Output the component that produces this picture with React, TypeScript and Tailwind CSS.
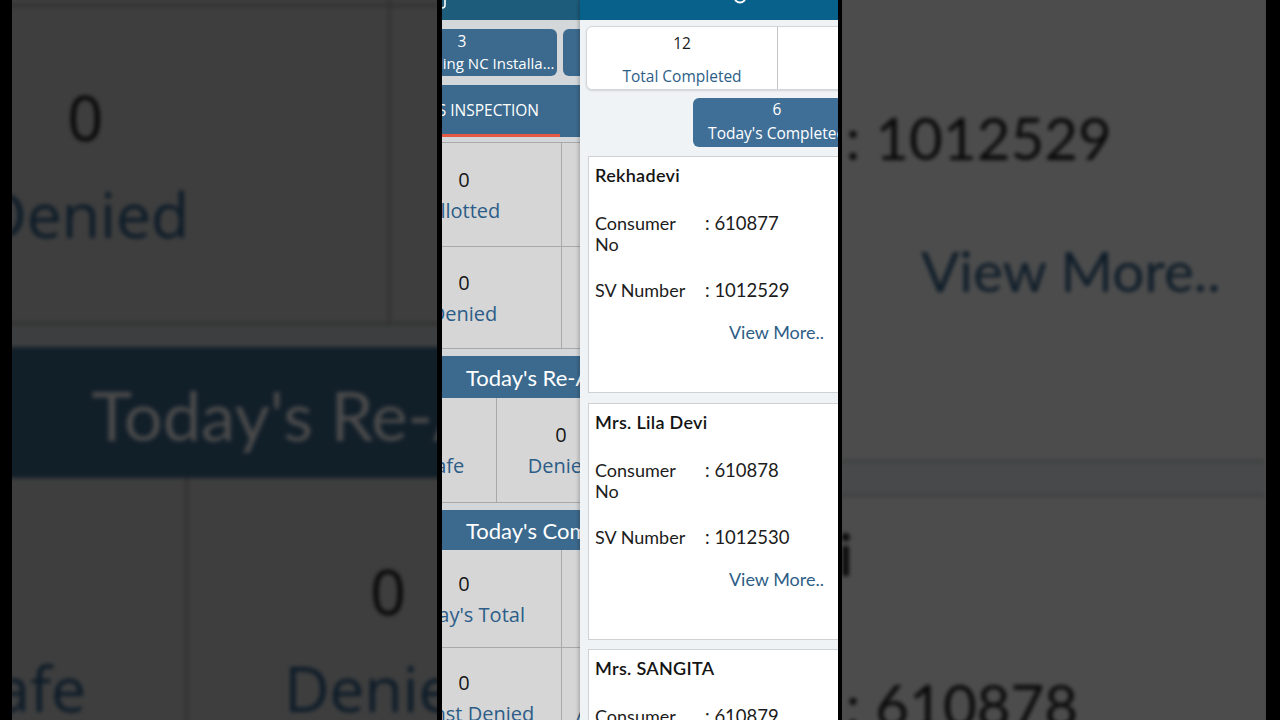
const StatCell = ({ value, label, className }: { value: string; label: string; className: string }) => (
  <div className={`flex flex-col items-center whitespace-nowrap ${className}`}>
    <span className="text-[20px] leading-[26px] text-[#161616]">{value}</span>
    <span className="text-[20px] leading-[36px] text-[#2b5d88]">{label}</span>
  </div>
);

// dashboard behind the drawer; its origin sits 75px left of the phone edge
function MainScreen() {
  return (
    <div className="-ml-[75px] w-[400px] bg-[#d3d7da] font-['Open_Sans',sans-serif]">
      <div className="h-[20px] bg-[#1d5c7b] pl-[74px]">
        <svg width="6" height="9" viewBox="0 0 6 9">
          <path d="M4 0 V5 Q4 8 1 8" stroke="white" strokeWidth="1.6" fill="none" />
        </svg>
      </div>

      <div className="flex gap-[6px] py-[9px]">
        <div className="flex h-[47px] w-[190px] flex-col items-center rounded-[6px] bg-[#3c6a8e] pt-[2px] text-white">
          <span className="text-[15.5px] leading-[20px]">3</span>
          <span className="w-full truncate pl-[40px] pr-[1px] text-[15px] leading-[24px]">Pending NC Installation</span>
        </div>
        <div className="flex h-[47px] w-[190px] flex-col items-center rounded-[6px] bg-[#3c6a8e] pt-[2px] text-white">
          <span className="text-[15.5px] leading-[20px]">0</span>
          <span className="text-[15px] leading-[24px]">Pending</span>
        </div>
      </div>

      <div className="flex h-[52px] flex-col bg-[#3c6a8e]">
        <div className="flex h-[49px] items-center pt-[3px]">
          <span className="w-[172px] whitespace-nowrap text-right text-[15.5px] font-medium text-white">GAS INSPECTION</span>
        </div>
        <div className="h-[3px] w-[193px] bg-[#e05a44]" />
      </div>

      <div className="mt-[5px] border-t border-[#a9a9a9] bg-[#d6d6d6]">
        <div className="flex h-[104px] border-b border-[#a9a9a9]">
          <StatCell className="w-[195px] border-r border-[#a9a9a9] pt-[24px]" value="0" label="Allotted" />
          <StatCell className="flex-1 pt-[24px]" value="0" label="Re-Allotted" />
        </div>
        <div className="flex h-[102px] border-b border-[#a9a9a9]">
          <StatCell className="w-[195px] border-r border-[#a9a9a9] pt-[23px]" value="0" label="Denied" />
          <StatCell className="flex-1 pt-[23px]" value="0" label="Pending" />
        </div>
      </div>

      <div className="mt-[7px] flex h-[42px] items-center whitespace-nowrap bg-[#3c6a8e] pl-[99px] font-['Lato',sans-serif] text-[22px] text-white">
        Today's Re-Allotted
      </div>
      <div className="flex h-[105px] border-b border-[#a9a9a9] bg-[#d6d6d6]">
        <StatCell className="w-[130px] border-r border-[#a9a9a9] pt-[24px]" value="0" label="Unsafe" />
        <StatCell className="w-[129px] border-r border-[#a9a9a9] pt-[24px]" value="0" label="Denied" />
        <StatCell className="flex-1 pt-[24px]" value="0" label="Safe" />
      </div>

      <div className="mt-[7px] flex h-[40px] items-center whitespace-nowrap bg-[#3c6a8e] pl-[99px] font-['Lato',sans-serif] text-[22px] text-white">
        Today's Completed
      </div>
      <div className="bg-[#d6d6d6]">
        <div className="flex h-[98px] border-b border-[#a9a9a9]">
          <StatCell className="w-[195px] border-r border-[#a9a9a9] pt-[21px]" value="0" label="Today's Total" />
          <StatCell className="flex-1 pt-[21px]" value="0" label="Safe" />
        </div>
        <div className="flex h-[98px] border-b border-[#a9a9a9]">
          <StatCell className="w-[195px] border-r border-[#a9a9a9] pt-[22px]" value="0" label="Against Denied" />
          <StatCell className="flex-1 pt-[22px]" value="0" label="Against Re-Allotted" />
        </div>
      </div>
    </div>
  );
}

const consumers = [
  { name: "Rekhadevi", no: "610877", sv: "1012529" },
  { name: "Mrs. Lila Devi", no: "610878", sv: "1012530" },
  { name: "Mrs. SANGITA", no: "610879", sv: "1012531" },
];

function Drawer() {
  return (
    <div className="h-full w-[258px] shrink-0 overflow-hidden bg-[#eff3f6] font-['Lato',sans-serif] shadow-[-2px_0_3px_rgba(0,0,0,0.18)]">
      <div className="h-[20px] bg-[#08618a] pl-[154px]">
        <svg width="12" height="5" viewBox="0 0 12 5">
          <path d="M1 0 Q6 5 11 0" stroke="white" strokeWidth="1.8" fill="none" />
        </svg>
      </div>

      <div className="pl-[6px] pt-[6px] font-['Open_Sans',sans-serif]">
        <div className="flex h-[64px] w-[300px] rounded-l-[6px] border border-[#d3d6d9] bg-white shadow-[0_1px_2px_rgba(0,0,0,0.12)]">
          <div className="flex w-[191px] flex-col items-center border-r border-[#c4c4c4] pt-[6px]">
            <span className="text-[15.5px] leading-[20px] text-[#1a1a1a]">12</span>
            <span className="mt-[12px] text-[15.5px] leading-[22px] text-[#2d5e86]">Total Completed</span>
          </div>
        </div>
        <div className="pl-[107px] pt-[8px]">
          <div className="flex h-[49px] w-[168px] flex-col items-center rounded-[6px] bg-[#3f6f97] pt-[1px] text-white">
            <span className="text-[15.5px] leading-[20px]">6</span>
            <span className="mt-[2px] whitespace-nowrap text-[15.5px] leading-[24px]">Today's Completed</span>
          </div>
        </div>
      </div>

      <div className="flex flex-col gap-[9.5px] pl-[8px] pt-[9px]">
        {consumers.map((c) => (
          <div key={c.no} className="h-[237px] w-[252px] border border-[#cfd2d4] bg-white pl-[6px] pr-[15px] pt-[7px] text-[#1c1c1c]">
            <div className="whitespace-nowrap text-[18px] font-semibold leading-[22px] tracking-[0.3px] text-[#141414]">{c.name}</div>
            <div className="mt-[27px] flex text-[18px] leading-[21px]">
              <div className="w-[110px] pr-[12px]">Consumer No</div>
              <div className="text-[18.5px]">: {c.no}</div>
            </div>
            <div className="mt-[25px] flex text-[18px] leading-[21px]">
              <div className="w-[110px] pr-[12px]">SV Number</div>
              <div className="text-[18.5px]">: {c.sv}</div>
            </div>
            <div className="mt-[21px] text-right text-[18px] leading-[21px] text-[#2e5e86]">View More..</div>
          </div>
        ))}
      </div>
    </div>
  );
}

export default function App() {
  return (
    <div className="flex h-[720px] w-[1280px] overflow-hidden bg-black">
      <div className="w-[12px] shrink-0" />

      {/* blurred, magnified copy of the dashboard */}
      <div className="h-full w-[425px] shrink-0 overflow-hidden bg-[#414141]">
        <div className="w-[138px] origin-top-left translate-x-[4.7px] -translate-y-[763.7px] scale-[3.12] brightness-[0.29] blur-[0.6px]">
          <MainScreen />
        </div>
      </div>

      <div className="w-[5px] shrink-0" />

      {/* phone screen */}
      <div className="flex h-full w-[396px] shrink-0 overflow-hidden">
        <div className="h-full w-[138px] shrink-0 overflow-hidden">
          <MainScreen />
        </div>
        <Drawer />
      </div>

      <div className="w-[4px] shrink-0" />

      {/* blurred, magnified copy of the drawer */}
      <div className="h-full w-[424px] shrink-0 overflow-hidden bg-[#4b4b4b]">
        <div className="h-[1000px] w-[258px] origin-top-left -translate-x-[390px] -translate-y-[775.5px] scale-[3.15] brightness-[0.3] blur-[0.6px]">
          <Drawer />
        </div>
      </div>
    </div>
  );
}
